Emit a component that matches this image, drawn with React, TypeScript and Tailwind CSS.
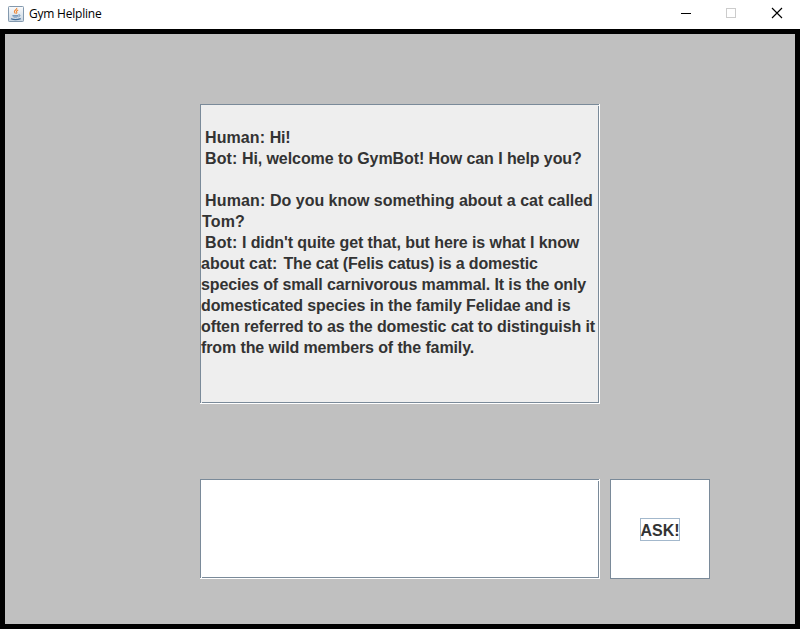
type Segment = { text: string; style: string };

const lines: Segment[][] = [
  [
    { text: "Human: ", style: "pl-1 tracking-[0.1px]" },
    { text: "Hi!", style: "tracking-[-0.2px]" },
  ],
  [
    { text: "Bot: ", style: "pl-1 tracking-[0.1px]" },
    { text: "Hi, welcome to GymBot! How can I help you?", style: "tracking-[-0.08px]" },
  ],
  [],
  [
    { text: "Human: ", style: "pl-1 tracking-[0.15px]" },
    { text: "Do you know something about a cat called", style: "tracking-[-0.02px]" },
  ],
  [{ text: "Tom?", style: "pl-px tracking-[0.15px]" }],
  [
    { text: "Bot: ", style: "pl-1 tracking-[0.1px]" },
    { text: "I didn't quite get that, but here is what I know", style: "tracking-[-0.09px]" },
  ],
  [
    { text: "about cat:", style: "" },
    { text: "The cat (Felis catus) is a domestic", style: "pl-[6px] tracking-[-0.15px]" },
  ],
  [{ text: "species of small carnivorous mammal. It is the only", style: "tracking-[-0.12px]" }],
  [{ text: "domesticated species in the family Felidae and is", style: "tracking-[-0.1px]" }],
  [{ text: "often referred to as the domestic cat to distinguish it", style: "tracking-[-0.11px]" }],
  [{ text: "from the wild members of the family.", style: "tracking-[-0.11px]" }],
];

function JavaIcon() {
  return (
    <svg width="16" height="16" viewBox="0 0 16 16" fill="none">
      <defs>
        <linearGradient id="tile" x1="0" y1="0" x2="0" y2="1">
          <stop offset="0" stopColor="#fbfcfd" />
          <stop offset="1" stopColor="#c8d5e1" />
        </linearGradient>
      </defs>
      <rect x="0.5" y="0.5" width="15" height="15" rx="0.8" fill="url(#tile)" stroke="#8399ae" />
      <path d="M8.8 1.8C9.2 3.7 6 4.3 6.4 5.8C6.6 6.5 7.3 6.8 7.4 7.6M10.2 4C8.6 4.6 8.1 5.3 8.7 6.1C9 6.6 8.8 7.1 8.4 7.6" stroke="#ef8a38" strokeWidth="1.1" />
      <path d="M4.4 9H10.2C10.2 10.9 9.5 11.5 7.4 11.5S4.6 10.9 4.4 9Z" fill="#638bb3" />
      <path d="M5 10.2H9.8" stroke="#d5e0ea" strokeWidth="0.6" />
      <path d="M10.3 8.9C12.7 8.5 12.4 10.2 10.4 10.9" stroke="#638bb3" />
      <path d="M3 12.8C5.3 13.7 9.8 13.7 12.7 12.6" stroke="#426e9b" strokeWidth="1.2" />
    </svg>
  );
}

function TitleBar() {
  return (
    <header className="flex h-[29px] shrink-0 items-start justify-between bg-white font-normal">
      <div className="flex h-[27px] items-center gap-[5px] pl-2">
        <JavaIcon />
        <span className="font-['Open_Sans','Noto_Sans',sans-serif] text-[12px] leading-4 tracking-[-0.22px] text-black">Gym Helpline</span>
      </div>
      <div className="flex h-[27px] items-center">
        <svg width="46" height="27" viewBox="0 0 46 27" shapeRendering="crispEdges">
          <path d="M19 13.5H29" stroke="#000" />
        </svg>
        <svg width="46" height="27" viewBox="0 0 46 27" shapeRendering="crispEdges">
          <rect x="18.5" y="8.5" width="9" height="9" fill="none" stroke="#ccc" />
        </svg>
        <svg width="46" height="27" viewBox="0 0 46 27">
          <path d="M18 8L28 18M28 8L18 18" stroke="#000" strokeWidth="1.15" />
        </svg>
      </div>
    </header>
  );
}

export default function App() {
  return (
    <div className="flex h-[629px] w-[800px] flex-col overflow-hidden font-['Liberation_Sans',Arial,sans-serif] text-[16px] font-bold text-[#333]">
      <TitleBar />
      <main className="flex flex-1 flex-col border-5 border-black bg-[#c0c0c0] pt-[70px] pl-[195px]">
        <div className="h-[300px] w-[400px] border-r border-b border-white">
          <div className="relative h-full border border-[#7a8a99] bg-[#eee] pt-[22px]">
            <i className="absolute top-0 -right-px size-px bg-[#eee]" />
            <i className="absolute -bottom-px left-0 size-px bg-[#eee]" />
            {lines.map((segments, i) => (
              <div key={i} className="h-[21px] leading-[21px] whitespace-pre">
                {segments.map((segment, j) => (
                  <span key={j} className={segment.style}>{segment.text}</span>
                ))}
              </div>
            ))}
          </div>
        </div>
        <div className="mt-[75px] flex gap-[10px]">
          <div className="h-[100px] w-[400px] border-r border-b border-white">
            <div className="relative h-full border border-[#7a8a99] bg-white">
              <i className="absolute top-0 -right-px size-px bg-white" />
              <i className="absolute -bottom-px left-0 size-px bg-white" />
            </div>
          </div>
          <button className="flex h-[100px] w-[100px] items-center justify-center border border-[#7a8a99] bg-white pt-px">
            <span className="flex h-[23px] w-10 items-center justify-center border border-[#a3b8cc] pt-[2px] leading-[21px]">ASK!</span>
          </button>
        </div>
      </main>
    </div>
  );
}
